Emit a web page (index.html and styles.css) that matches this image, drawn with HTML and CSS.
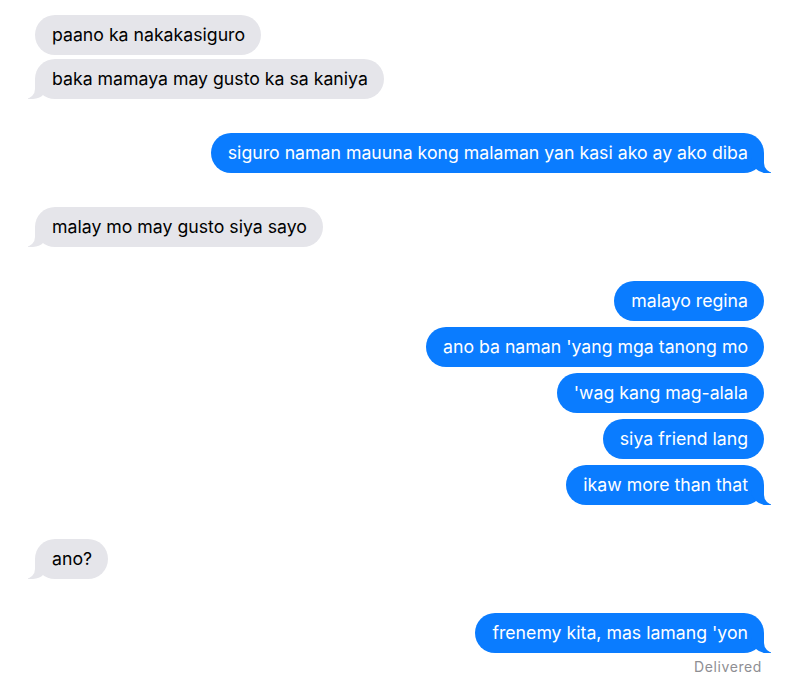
FILE: index.html
```html
<!DOCTYPE html>
<html lang="en">

<head>
    <meta charset="UTF-8" />
    <title>Messages</title>
    <link rel="stylesheet" href="styles.css">
</head>

<body>

    <div class="thread">
        <div class="group them">
            <div class="bubble">paano ka nakakasiguro</div>
            <div class="bubble tail">baka mamaya may gusto ka sa kaniya</div>
        </div>

        <div class="group me">
            <div class="bubble tail">siguro naman mauuna kong malaman yan kasi ako ay ako diba</div>
        </div>

        <div class="group them">
            <div class="bubble tail">malay mo may gusto siya sayo</div>
        </div>

        <div class="group me">
            <div class="bubble">malayo regina</div>
            <div class="bubble">ano ba naman 'yang mga tanong mo</div>
            <div class="bubble">'wag kang mag-alala</div>
            <div class="bubble">siya friend lang</div>
            <div class="bubble tail">ikaw more than that</div>
        </div>

        <div class="group them">
            <div class="bubble tail">ano?</div>
        </div>

        <div class="group me">
            <div class="bubble tail">frenemy kita, mas lamang 'yon</div>
            <div class="status">Delivered</div>
        </div>
    </div>

</body>

</html>
```

FILE: styles.css
```css
body {
    background: #ffffff;
    font-family: Inter, "Noto Sans", Arial, sans-serif;
    margin: 0;
    padding: 0;
}

.thread {
    display: flex;
    flex-direction: column;
    gap: 34px;
    padding: 15px 36px 0 35px;
}

.group {
    display: flex;
    flex-direction: column;
    gap: 6px;
}

.group.them {
    align-items: flex-start;
    gap: 4px;
}

.group.me {
    align-items: flex-end;
}

.bubble {
    position: relative;
    padding: 9px 16px 9px 17px;
    line-height: 22px;
    font-size: 17.7px;
    border-radius: 20px;
    white-space: nowrap;
}

.them .bubble {
    background: #e5e5ea;
    color: #000000;
}

.me .bubble {
    background: #0a7cff;
    color: #ffffff;
}

/* little curled tail on the last bubble */
.bubble.tail::before,
.bubble.tail::after {
    content: "";
    position: absolute;
    bottom: 0;
    height: 20px;
}

.me .bubble.tail::before {
    right: -7px;
    width: 20px;
    background: #0a7cff;
    border-bottom-left-radius: 15px;
}

.me .bubble.tail::after {
    right: -10px;
    width: 10px;
    background: #ffffff;
    border-bottom-left-radius: 10px;
}

.them .bubble.tail::before {
    left: -7px;
    width: 20px;
    background: #e5e5ea;
    border-bottom-right-radius: 15px;
}

.them .bubble.tail::after {
    left: -10px;
    width: 10px;
    background: #ffffff;
    border-bottom-right-radius: 10px;
}

.status {
    margin-top: -1px;
    padding-right: 2px;
    font-size: 14px;
    color: #8e8e93;
    letter-spacing: 0.6px;
}
```
